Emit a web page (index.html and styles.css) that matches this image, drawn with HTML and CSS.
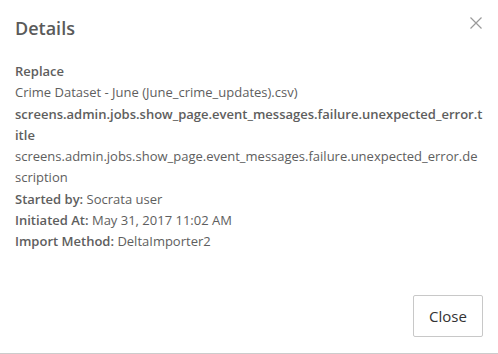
FILE: index.html
```html
<!DOCTYPE html>
<html>
<head>
<meta charset="utf-8">
<link rel="stylesheet" href="styles.css">
</head>
<body>
<div class="modal">
  <div class="header">
    <h2 class="title">Details</h2>
    <button class="close-x" aria-label="Close">
      <svg width="12" height="12" viewBox="0 0 12 12"><path d="M0.5 0.5 L11.5 11.5 M11.5 0.5 L0.5 11.5" stroke="#9a9a9a" stroke-width="1.2" fill="none"/></svg>
    </button>
  </div>
  <div class="content">
    <div class="line bold">Replace</div>
    <div class="line">Crime Dataset - June (June_crime_updates).csv)</div>
    <div class="line bold">screens.admin.jobs.show_page.event_messages.failure.unexpected_error.title</div>
    <div class="line">screens.admin.jobs.show_page.event_messages.failure.unexpected_error.description</div>
    <div class="line"><b>Started by:</b> Socrata user</div>
    <div class="line"><b>Initiated At:</b> May 31, 2017 11:02 AM</div>
    <div class="line"><b>Import Method:</b> DeltaImporter2</div>
  </div>
  <div class="footer">
    <button class="btn">Close</button>
  </div>
</div>
</body>
</html>
```

FILE: styles.css
```css
html, body {
  margin: 0;
  padding: 0;
  background: #fff;
}
body {
  font-family: "Open Sans", "Liberation Sans", sans-serif;
  color: #5e5e5e;
}
.modal {
  width: 498px;
  height: 353px;
  border-bottom: 1px solid #cccccc;
  display: flex;
  flex-direction: column;
}
.header {
  display: flex;
  justify-content: space-between;
  padding: 14px 16px 0 15px;
  height: 47px;
}
.title {
  margin: 0;
  font-size: 18px;
  font-weight: 600;
  line-height: 28px;
  color: #5a5a5a;
}
.close-x {
  border: 0;
  background: none;
  padding: 0;
  margin-top: 3px;
  width: 12px;
  height: 12px;
  display: block;
}
.close-x svg { display: block; }
.content {
  padding: 0 15px;
  font-size: 13px;
  line-height: 21.25px;
  word-break: break-all;
}
.bold, b { font-weight: 600; }
.footer {
  margin-top: auto;
  display: flex;
  justify-content: flex-end;
  padding: 0 15px 16px 0;
}
.btn {
  font-family: "Open Sans", "Liberation Sans", sans-serif;
  font-size: 15px;
  color: #333;
  background: #fff;
  border: 1px solid #c8c8c8;
  border-radius: 2px;
  width: 70px;
  height: 42px;
  padding: 0;
}
```
